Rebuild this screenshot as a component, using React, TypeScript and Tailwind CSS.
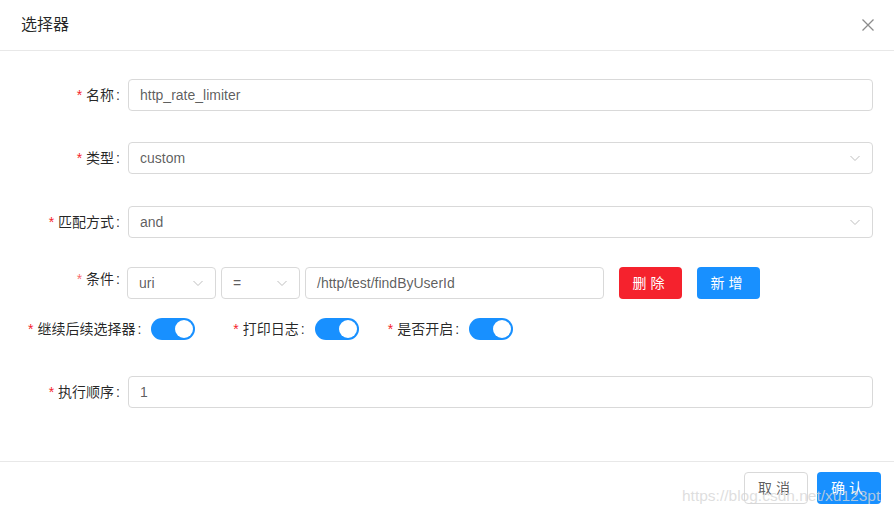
import React from 'react';

const font = { fontFamily: '"Liberation Sans", "Noto Sans CJK SC", sans-serif' };

function Chevron() {
  return (
    <svg width="12" height="12" viewBox="0 0 12 12" className="text-[#bfbfbf]">
      <path d="M1.5 4 L6 8.5 L10.5 4" fill="none" stroke="currentColor" strokeWidth="1" />
    </svg>
  );
}

function Star({ light }: { light?: boolean }) {
  return <span className={`mr-[4px] ${light ? 'text-[#f5222d]/70' : 'text-[#f5222d]'}`}>*</span>;
}

function Label({ text }: { text: string }) {
  return (
    <div className="w-[128px] shrink-0 text-right text-[14px] text-black/85 whitespace-nowrap">
      <Star />
      {text}
      <span className="ml-[2px] mr-[8px]">:</span>
    </div>
  );
}

function Input({ value, select }: { value: string; select?: boolean }) {
  return (
    <div className="flex h-[32px] flex-1 items-center justify-between rounded-[4px] border border-[#d9d9d9] bg-white pl-[11px] pr-[11px] text-[14px] text-black/65">
      <span>{value}</span>
      {select && <Chevron />}
    </div>
  );
}

function Switch() {
  return (
    <div className="flex h-[22px] w-[44px] shrink-0 items-center justify-end rounded-full bg-[#1890ff] pr-[2px]">
      <div className="h-[18px] w-[18px] rounded-full bg-white" />
    </div>
  );
}

function SwitchItem({ text, className }: { text: string; className?: string }) {
  return (
    <div className={`flex items-center ${className ?? ''}`}>
      <div className="text-[14px] text-black/85 whitespace-nowrap">
        <Star />
        {text}
        <span className="ml-[2px] mr-[10px]">:</span>
      </div>
      <Switch />
    </div>
  );
}

export default function App() {
  return (
    <div className="relative h-[514px] w-[894px] overflow-hidden bg-white" style={font}>
      {/* Header */}
      <div className="flex h-[51px] items-center justify-between border-b border-[#e8e8e8] pl-[21px] pr-[19px]">
        <span className="text-[16px] text-black/85">选择器</span>
        <svg width="14" height="14" viewBox="0 0 14 14" className="text-[#8c8c8c]">
          <path d="M1.5 1.5 L12.5 12.5 M12.5 1.5 L1.5 12.5" stroke="currentColor" strokeWidth="1.3" />
        </svg>
      </div>

      {/* Form */}
      <div className="flex flex-col pr-[21px] pt-[28px]">
        <div className="flex items-center">
          <Label text="名称" />
          <Input value="http_rate_limiter" />
        </div>
        <div className="mt-[31px] flex items-center">
          <Label text="类型" />
          <Input value="custom" select />
        </div>
        <div className="mt-[32px] flex items-center">
          <Label text="匹配方式" />
          <Input value="and" select />
        </div>

        <div className="mt-[29px] flex items-center">
          <div className="w-[127px] shrink-0 -translate-y-[4px] text-right text-[14px] text-black/85 whitespace-nowrap">
            <Star light />
            条件
            <span className="ml-[2px] mr-[7px]">:</span>
          </div>
          <div className="flex w-[89px] shrink-0">
            <Input value="uri" select />
          </div>
          <div className="ml-[5px] flex w-[79px] shrink-0">
            <Input value="=" select />
          </div>
          <div className="ml-[5px] flex w-[299px] shrink-0">
            <Input value="/http/test/findByUserId" />
          </div>
          <button className="ml-[15px] h-[32px] w-[63px] rounded-[4px] bg-[#f5222d] text-[14px] tracking-[4px] text-white">删除</button>
          <button className="ml-[15px] h-[32px] w-[63px] rounded-[4px] bg-[#1890ff] text-[14px] tracking-[4px] text-white">新增</button>
        </div>

        <div className="mt-[19px] flex items-center pl-[28px]">
          <SwitchItem text="继续后续选择器" />
          <SwitchItem text="打印日志" className="ml-[38px]" />
          <SwitchItem text="是否开启" className="ml-[29px]" />
        </div>

        <div className="mt-[36px] flex items-center">
          <Label text="执行顺序" />
          <Input value="1" />
        </div>
      </div>

      {/* Footer */}
      <div className="absolute bottom-0 left-0 right-0 flex h-[53px] items-start justify-end gap-[9px] border-t border-[#e8e8e8] pr-[13px] pt-[10px]">
        <button className="h-[32px] w-[64px] rounded-[4px] border border-[#d9d9d9] bg-white text-[14px] tracking-[4px] text-black/65">取消</button>
        <button className="h-[32px] w-[64px] rounded-[4px] bg-[#1890ff] text-[14px] tracking-[4px] text-white">确认</button>
      </div>

      {/* watermark */}
      <div className="pointer-events-none absolute left-[682px] top-[484px] text-[15.5px] text-[#d6d6d6]/80">
        https://blog.csdn.net/xu123pt
      </div>
    </div>
  );
}
